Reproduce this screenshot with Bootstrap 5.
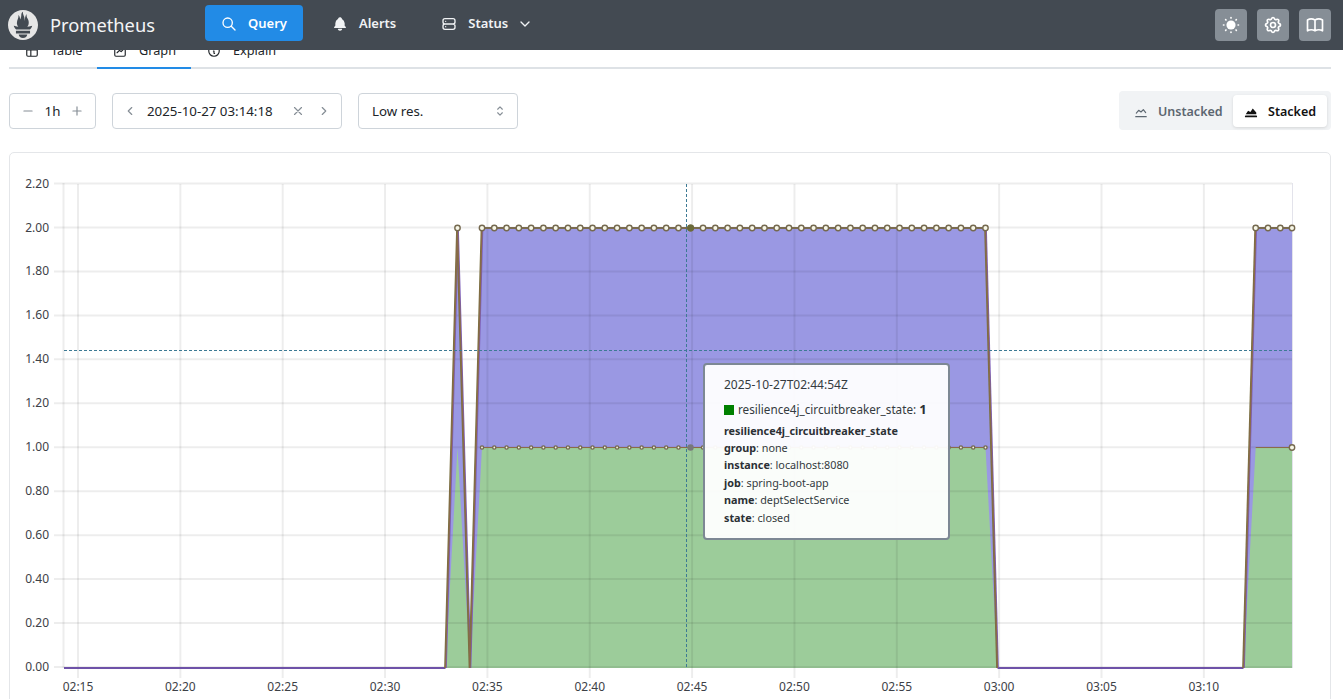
<!DOCTYPE html>
<html lang="en">
<head>
<meta charset="utf-8">
<title>Prometheus</title>
<link rel="stylesheet" href="https://cdn.jsdelivr.net/npm/bootstrap@5.3.0/dist/css/bootstrap.min.css">
<style>
html,body{height:699px;overflow:hidden;background:#fff}
body{font-family:"Noto Sans","Open Sans",sans-serif;font-size:14px;color:#212529}
svg.ico{fill:none;stroke:currentColor;stroke-width:2;stroke-linecap:round;stroke-linejoin:round;flex:none}
.topbar{height:50px;background:#434a52;padding:0 12px 0 8px;position:relative;z-index:2}
.brandname{font-size:18.3px;color:#f4f5f6;margin-left:12px;width:155px}
.navlnk{height:36px;border-radius:4px;color:#f1f3f5;font-weight:600;font-size:13px;padding:2px 16px 0;gap:11px;border:0;background:none;margin-left:13px;margin-top:-4px}
.navlnk.on{background:#228be6;color:#fff;margin-left:0}
.chevico{margin-left:-2px}
.iconbtn{width:32px;height:32px;border-radius:4px;background:#868e96;color:#fff;padding:0;border:0;margin-left:10px}
.pagebody{padding:0 12px 0 9px}
.tabclip{height:19px;overflow:hidden;box-shadow:inset 0 -2px 0 #dee2e6;align-items:flex-end}
.tabit{height:34px;border-bottom:2px solid transparent;padding:0 16px;gap:12px;font-size:12.7px;color:#212529;flex:none}
.tabit.on{border-bottom-color:#228be6;width:94px}
.tabit.tabfirst{width:88px}
.ctrlrow{margin-top:22px;height:39px}
.ctrlbox{height:36px;border:1px solid #ced4da;border-radius:4px;background:#fff;font-size:13.3px;color:#212529}
.ctrlbox span{padding-top:2px}
.dim{color:#868e96}
.stackwrap{background:#f1f3f5;border-radius:4px;height:39px;padding:4px;width:212px}
.stackit{font-size:12.5px;font-weight:600;color:#5c6670;height:32px;border-radius:4px;gap:10px;padding:3px 8px 0 11px;flex:1 1 auto;white-space:nowrap}
.stackit.on{background:#fff;color:#111;box-shadow:0 1px 3px rgba(0,0,0,.12);flex:0 0 94px}
.chartcard{margin-top:22px;height:600px;border:1px solid #e4e6e9;border-radius:5px;position:relative;overflow:hidden}
.chartcard svg{display:block;position:absolute;left:0;top:0}
.chartcard text{font-family:"Noto Sans",sans-serif;font-size:12px;fill:#3d4147}
.hovertip{position:absolute;left:693px;top:210px;width:247px;height:177px;background:rgba(255,255,255,.95);border:2px solid #7d8894;border-radius:4px;padding:11px 19px;font-size:10.8px;line-height:17.4px;color:#343a40;white-space:nowrap}
.hovertip b{font-weight:700;color:#2b3035}
.tiptime{font-size:12px;margin-bottom:6px;line-height:18px}
.tipname{font-size:11.7px;margin-bottom:3.5px;line-height:18px}
.tipname b{font-size:13px}
.swatch{display:inline-block;width:10px;height:10px;background:#008000;margin-right:4px;vertical-align:-1px}
</style>
</head>
<body>
<header class="topbar d-flex align-items-center">
  <svg width="30" height="30" viewBox="0 0 24 24" class="flex-none"><path fill="#e6e6e6" d="M12 0C5.373 0 0 5.372 0 12c0 6.627 5.373 12 12 12s12-5.373 12-12c0-6.628-5.373-12-12-12zm0 22.46c-1.885 0-3.414-1.26-3.414-2.814h6.828c0 1.553-1.528 2.813-3.414 2.813zm5.64-3.745H6.36v-2.046h11.28v2.046zm-.04-3.098H6.391c-.037-.043-.075-.086-.111-.13-1.155-1.401-1.427-2.133-1.69-2.879-.005-.025 1.4.287 2.395.511 0 0 .513.119 1.262.255-.72-.843-1.147-1.915-1.147-3.01 0-2.406 1.845-4.508 1.18-6.207.648.053 1.34 1.367 1.387 3.422.689-.951.977-2.69.977-3.755 0-1.103.727-2.385 1.454-2.429-.648 1.069.168 1.984.894 4.256.272.854.237 2.29.447 3.201.07-1.892.395-4.652 1.595-5.605-.529 1.2.079 2.702.494 3.424.671 1.164 1.078 2.047 1.078 3.716a4.642 4.642 0 01-1.11 2.996c.792-.149 1.34-.283 1.34-.283l2.573-.502s-.374 1.538-1.81 3.019z"/></svg>
  <div class="brandname">Prometheus</div>
  <button class="navlnk on d-flex align-items-center">
    <svg class="ico" width="16" height="16" viewBox="0 0 24 24"><path d="M3 10a7 7 0 1 0 14 0a7 7 0 1 0 -14 0M21 21l-6 -6"/></svg>Query</button>
  <button class="navlnk d-flex align-items-center">
    <svg width="16" height="16" viewBox="0 0 24 24" fill="currentColor"><path d="M14.235 19c.865 0 1.322 1.024 .745 1.668a3.992 3.992 0 0 1 -2.98 1.332a3.992 3.992 0 0 1 -2.98 -1.332c-.552 -.616 -.158 -1.579 .634 -1.661l.11 -.006h4.471z"/><path d="M12 2c1.358 0 2.506 .903 2.875 2.141l.046 .171l.008 .043a8.013 8.013 0 0 1 4.024 6.069l.028 .287l.019 .289v2.931l.021 .136a3 3 0 0 0 1.143 1.847l.167 .117l.162 .099c.86 .487 .56 1.766 -.377 1.864l-.116 .006h-16c-1.028 0 -1.387 -1.364 -.493 -1.87a3 3 0 0 0 1.472 -2.063l.021 -.143l.001 -2.97a8 8 0 0 1 3.821 -6.454l.248 -.146l.01 -.043a3.003 3.003 0 0 1 2.562 -2.29l.182 -.017l.176 -.004z"/></svg>Alerts</button>
  <button class="navlnk d-flex align-items-center">
    <svg class="ico" width="16" height="16" viewBox="0 0 24 24"><path d="M3 7a3 3 0 0 1 3 -3h12a3 3 0 0 1 3 3v2a3 3 0 0 1 -3 3h-12a3 3 0 0 1 -3 -3zM3 15a3 3 0 0 1 3 -3h12a3 3 0 0 1 3 3v2a3 3 0 0 1 -3 3h-12a3 3 0 0 1 -3 -3zM7 8v.01M7 16v.01"/></svg>Status
    <svg class="ico chevico" width="16" height="16" viewBox="0 0 24 24"><path d="M6 9l6 6l6 -6"/></svg></button>
  <div class="ms-auto d-flex">
    <button class="iconbtn d-flex align-items-center justify-content-center">
      <svg class="ico" width="20" height="20" viewBox="0 0 24 24"><circle cx="12" cy="12" r="5.5" fill="currentColor" stroke="none"/><path d="M3 12h.5M20.5 12h.5M12 3v.5M12 20.5v.5M5.6 5.6l.4 .4M18 18l.4 .4M5.6 18.4l.4 -.4M18 6l.4 -.4"/></svg></button>
    <button class="iconbtn d-flex align-items-center justify-content-center">
      <svg class="ico" width="20" height="20" viewBox="0 0 24 24" stroke-width="1.6"><path d="M10.325 4.317c.426 -1.756 2.924 -1.756 3.35 0a1.724 1.724 0 0 0 2.573 1.066c1.543 -.94 3.31 .826 2.37 2.37a1.724 1.724 0 0 0 1.065 2.572c1.756 .426 1.756 2.924 0 3.35a1.724 1.724 0 0 0 -1.066 2.573c.94 1.543 -.826 3.31 -2.37 2.37a1.724 1.724 0 0 0 -2.572 1.065c-.426 1.756 -2.924 1.756 -3.35 0a1.724 1.724 0 0 0 -2.573 -1.066c-1.543 .94 -3.31 -.826 -2.37 -2.37a1.724 1.724 0 0 0 -1.065 -2.572c-1.756 -.426 -1.756 -2.924 0 -3.35a1.724 1.724 0 0 0 1.066 -2.573c-.94 -1.543 .826 -3.31 2.37 -2.37c1 .608 2.296 .07 2.572 -1.065z"/><path d="M9 12a3 3 0 1 0 6 0a3 3 0 0 0 -6 0"/></svg></button>
    <button class="iconbtn d-flex align-items-center justify-content-center">
      <svg class="ico" width="20" height="20" viewBox="0 0 24 24" stroke-width="1.6"><path d="M3 19a9 9 0 0 1 9 0a9 9 0 0 1 9 0M3 6a9 9 0 0 1 9 0a9 9 0 0 1 9 0M3 6v13M12 6v13M21 6v13"/></svg></button>
  </div>
</header>
<main class="pagebody">
  <div class="tabclip d-flex">
    <div class="tabit tabfirst d-flex align-items-center">
      <svg class="ico" width="14" height="14" viewBox="0 0 24 24"><path d="M3 5a2 2 0 0 1 2 -2h14a2 2 0 0 1 2 2v14a2 2 0 0 1 -2 2h-14a2 2 0 0 1 -2 -2zM3 10h18M10 3v18"/></svg>Table</div>
    <div class="tabit on d-flex align-items-center">
      <svg class="ico" width="14" height="14" viewBox="0 0 24 24"><path d="M3 5a2 2 0 0 1 2 -2h14a2 2 0 0 1 2 2v14a2 2 0 0 1 -2 2h-14a2 2 0 0 1 -2 -2zM7 15l4 -4l3 2l3 -3"/></svg>Graph</div>
    <div class="tabit d-flex align-items-center">
      <svg class="ico" width="14" height="14" viewBox="0 0 24 24"><path d="M3 12a9 9 0 1 0 18 0a9 9 0 0 0 -18 0M12 8h.01M11 12h1v4h1"/></svg>Explain</div>
  </div>
  <div class="ctrlrow d-flex align-items-center justify-content-between">
    <div class="d-flex align-items-center">
      <div class="ctrlbox d-flex align-items-center" style="width:87px">
        <svg class="ico dim" style="margin-left:11px" width="14" height="14" viewBox="0 0 24 24"><path d="M5 12h14"/></svg>
        <span class="flex-grow-1 text-center">1h</span>
        <svg class="ico dim" style="margin-right:11px" width="14" height="14" viewBox="0 0 24 24"><path d="M12 5v14M5 12h14"/></svg>
      </div>
      <div class="ctrlbox d-flex align-items-center ms-3" style="width:230px">
        <svg class="ico dim" style="margin-left:10px" width="14" height="14" viewBox="0 0 24 24"><path d="M15 6l-6 6l6 6"/></svg>
        <span class="flex-grow-1" style="margin-left:10px">2025-10-27 03:14:18</span>
        <svg class="ico dim" width="14" height="14" viewBox="0 0 24 24" style="margin-right:12px"><path d="M18 6l-12 12M6 6l12 12"/></svg>
        <svg class="ico dim" style="margin-right:10px" width="14" height="14" viewBox="0 0 24 24"><path d="M9 6l6 6l-6 6"/></svg>
      </div>
      <div class="ctrlbox d-flex align-items-center ms-3" style="width:160px;padding:0 10px 0 13px">
        <span class="flex-grow-1">Low res.</span>
        <svg class="ico dim" width="14" height="14" viewBox="0 0 24 24"><path d="M8 9l4 -4l4 4M16 15l-4 4l-4 -4"/></svg>
      </div>
    </div>
    <div class="stackwrap d-flex align-items-center">
      <div class="stackit d-flex align-items-center">
        <svg class="ico" width="14" height="14" viewBox="0 0 24 24"><path d="M3 20h18M4 14l4 -5l4 3l4 -4l4 5"/></svg>Unstacked</div>
      <div class="stackit on d-flex align-items-center">
        <svg width="14" height="14" viewBox="0 0 24 24" fill="currentColor"><path d="M3 18h18a1 1 0 0 1 0 3h-18a1 1 0 0 1 0 -3zM3 16l4 -6l4 2l4 -6l6 7v3z"/></svg>Stacked</div>
    </div>
  </div>
  <div class="chartcard">
    <svg id="plot" width="1322" height="548" viewBox="0 0 1322 548" xmlns="http://www.w3.org/2000/svg"></svg>
    <div class="hovertip">
      <div class="tiptime">2025-10-27T02:44:54Z</div>
      <div class="tipname"><span class="swatch"></span>resilience4j_circuitbreaker_state: <b>1</b></div>
      <div><b>resilience4j_circuitbreaker_state</b></div>
      <div><b>group</b>: none</div>
      <div><b>instance</b>: localhost:8080</div>
      <div><b>job</b>: spring-boot-app</div>
      <div><b>name</b>: deptSelectService</div>
      <div><b>state</b>: closed</div>
    </div>
  </div>
</main>
<script src="https://cdn.jsdelivr.net/npm/bootstrap@5.3.0/dist/js/bootstrap.bundle.min.js"></script>
<script>
var ox=10,oy=153,h='';
function X(x){return x-ox} function Y(y){return y-oy}
var y0=668,y1=447.5,y2=228,L=64,R=1292;
function poly(p,a){return '<polygon points="'+p.map(function(q){return X(q[0])+','+Y(q[1])}).join(' ')+'" '+a+'/>'}
function line(p,a){return '<polyline fill="none" points="'+p.map(function(q){return X(q[0])+','+Y(q[1])}).join(' ')+'" '+a+'/>'}
var sx1=445.5,sx2=457.5,sx3=470,sx4=482,ex1=985.5,ex2=997.5,rx1=1243.5,rx2=1255.7;
var blue='fill="#9a98e3"',green='fill="#9ccc9a"';
h+=poly([[sx1,y0],[sx2,y2],[sx3,y0]],blue);
h+=poly([[sx3,y0],[sx4,y2],[ex1,y2],[ex2,y0]],blue);
h+=poly([[rx1,y0],[rx2,y2],[R,y2],[R,y0]],blue);
h+=poly([[sx1,y0],[sx2,y1],[sx3,y0]],green);
h+=poly([[sx3,y0],[sx4,y1],[ex1,y1],[ex2,y0]],green);
h+=poly([[rx1,y0],[rx2,y1],[R,y1],[R,y0]],green);
var grid='stroke="rgba(0,0,0,.07)" stroke-width="2"';
var labels=['02:15','02:20','02:25','02:30','02:35','02:40','02:45','02:50','02:55','03:00','03:05','03:10'];
labels.forEach(function(t,i){var x=78+i*102.35;
  h+='<line x1="'+X(x)+'" x2="'+X(x)+'" y1="'+Y(184)+'" y2="'+Y(678)+'" '+grid+'/>';
  h+='<text x="'+X(x)+'" y="'+Y(690.5)+'" text-anchor="middle">'+t+'</text>';});
for(var i=0;i<=11;i++){var y=667-i*43.95,v=(i*.2).toFixed(2);
  h+='<line x1="'+X(54)+'" x2="'+X(1292)+'" y1="'+Y(y)+'" y2="'+Y(y)+'" '+grid+'/>';
  h+='<text x="'+X(49)+'" y="'+Y(y+4)+'" text-anchor="end">'+v+'</text>';}
h+='<line x1="'+X(63.5)+'" x2="'+X(63.5)+'" y1="'+Y(183)+'" y2="'+Y(668)+'" '+grid+'/>';
h+='<line x1="'+X(1292.5)+'" x2="'+X(1292.5)+'" y1="'+Y(183)+'" y2="'+Y(668)+'" stroke="rgba(60,60,110,.14)"/>';
var purple='stroke="#7d5fb8" stroke-width="1.5"',olive='stroke="#7a7040" stroke-width="1.5"',brown='stroke="#8b6a4a" stroke-width="1.2"';
var base='stroke="#6e52a8" stroke-width="2"',flat='stroke="#7b6c50" stroke-width="2"';
h+=line([[L,y0],[sx1,y0]],base)+line([[ex2,y0],[rx1,y0]],base);
[[[sx1,y0],[sx2,y2],[sx3,y0],[sx4,y2]],[[ex1,y2],[ex2,y0]],[[rx1,y0],[rx2,y2]]].forEach(function(p){
  h+=line(p.map(function(q){return [q[0]+.6,q[1]]}),purple);
  h+=line(p.map(function(q){return [q[0]-.6,q[1]]}),olive);
  h+=line(p,brown);
});
h+=line([[sx4,y1],[ex1,y1]],brown)+line([[rx2,y1],[R,y1]],brown);
h+=line([[sx4,y2],[ex1,y2]],flat)+line([[rx2,y2],[R,y2]],flat);
function dot(x,y,r){return '<circle cx="'+X(x)+'" cy="'+Y(y)+'" r="'+r+'" fill="#f7f7e8" stroke="#75694f" stroke-width="1.4"/>'}
h+=dot(sx2,y2,2.7);
for(var x=sx4;x<=ex1+1;x+=12.28){h+=dot(x,y2,2.7);h+=dot(x,y1,1.6);}
[rx2,rx2+12.3,rx2+24.6,R].forEach(function(x){h+=dot(x,y2,2.7)});
h+=dot(R,y1,2.7);
var dash='stroke="#3d7a94" stroke-width="1" stroke-dasharray="3,2"';
h+='<line x1="'+X(686.5)+'" x2="'+X(686.5)+'" y1="'+Y(184)+'" y2="'+Y(668)+'" '+dash+'/>';
h+='<line x1="'+X(64)+'" x2="'+X(1292)+'" y1="'+Y(350.5)+'" y2="'+Y(350.5)+'" '+dash+'/>';
h+='<circle cx="'+X(690.5)+'" cy="'+Y(228)+'" r="3.4" fill="#6b6b3a"/>';
h+='<circle cx="'+X(690.5)+'" cy="'+Y(447.5)+'" r="3.2" fill="#77787a"/>';
document.getElementById('plot').innerHTML=h;
</script>
</body>
</html>
